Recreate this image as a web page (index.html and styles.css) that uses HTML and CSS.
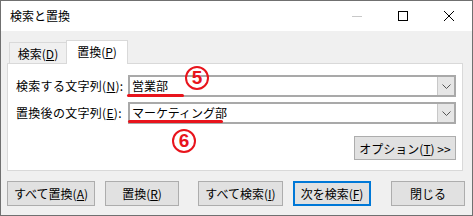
FILE: index.html
```html
<!DOCTYPE html>
<html lang="ja">
<head>
<meta charset="utf-8">
<title>検索と置換</title>
<link rel="stylesheet" href="styles.css">
</head>
<body>
<div class="window">
  <div class="titlebar">
    <div class="title">検索と置換</div>
    <div class="controls">
      <span class="ctl ctl-min"><svg width="10" height="10" viewBox="0 0 10 10"><line x1="0" y1="5.5" x2="10" y2="5.5" stroke="#c8c8c8" stroke-width="1"/></svg></span>
      <span class="ctl ctl-max"><svg width="10" height="10" viewBox="0 0 10 10"><rect x="0.5" y="0.5" width="9" height="9" fill="none" stroke="#000" stroke-width="1"/></svg></span>
      <span class="ctl ctl-close"><svg width="10" height="10" viewBox="0 0 10 10"><path d="M0 0 L10 10 M10 0 L0 10" stroke="#000" stroke-width="1"/></svg></span>
    </div>
  </div>
  <div class="content">
    <div class="tabs">
      <div class="tab">検索(<u>D</u>)</div>
      <div class="tab active">置換(<u>P</u>)</div>
    </div>
    <div class="panel">
      <div class="row row-find">
        <label class="label">検索する文字列(<u>N</u>):</label>
        <div class="combo"><span class="value">営業部</span><span class="drop"><svg width="9" height="5" viewBox="0 0 9 5"><polyline points="0.5,0.5 4.5,4.5 8.5,0.5" fill="none" stroke="#555" stroke-width="1"/></svg></span></div>
      </div>
      <div class="row row-replace">
        <label class="label">置換後の文字列(<u>E</u>):</label>
        <div class="combo"><span class="value">マーケティング部</span><span class="drop"><svg width="9" height="5" viewBox="0 0 9 5"><polyline points="0.5,0.5 4.5,4.5 8.5,0.5" fill="none" stroke="#555" stroke-width="1"/></svg></span></div>
      </div>
      <div class="row row-opt">
        <button class="btn btn-opt">オプション(<u>T</u>)&nbsp;&gt;&gt;</button>
      </div>
      <span class="mark line1"></span>
      <span class="mark num num5">5</span>
      <span class="mark line2"></span>
      <span class="mark num num6">6</span>
    </div>
    <div class="actions">
      <button class="btn b1">すべて置換(<u>A</u>)</button>
      <button class="btn b2">置換(<u>R</u>)</button>
      <button class="btn b3">すべて検索(<u>I</u>)</button>
      <button class="btn b4 focused">次を検索(<u>F</u>)</button>
      <button class="btn b5">閉じる</button>
    </div>
  </div>
</div>
</body>
</html>
```
FILE: styles.css
```css
* { box-sizing: border-box; }
html, body { margin: 0; padding: 0; }
body {
  font-family: "Noto Sans CJK JP", "Noto Sans", sans-serif;
  font-size: 12px;
  color: #000;
  background: #fff;
}
u { text-decoration: underline; text-underline-offset: 1px; }
.window {
  width: 473px;
  height: 216px;
  border: 1px solid #707070;
  display: flex;
  flex-direction: column;
  background: #f0f0f0;
}
.titlebar {
  height: 30px;
  background: #fff;
  display: flex;
  align-items: center;
  justify-content: space-between;
  flex: none;
}
.title { padding-left: 9px; line-height: 16px; }
.controls { display: flex; align-items: center; height: 100%; }
.ctl { width: 46px; height: 100%; display: flex; align-items: center; justify-content: center; }
.ctl svg { display: block; }
.content { flex: 1; display: flex; flex-direction: column; }
.tabs {
  display: flex;
  align-items: flex-end;
  margin-top: 9px;
  padding-left: 8px;
  height: 23px;
  position: relative;
  z-index: 1;
}
.tab {
  height: 21px;
  width: 58px;
  border: 1px solid #d9d9d9;
  border-bottom: none;
  background: #f0f0f0;
  display: flex;
  align-items: center;
  justify-content: center;
  padding-top: 1px;
}
.tab.active {
  height: 24px;
  width: 62px;
  background: #fff;
  margin-left: -1px;
  margin-bottom: -1px;
  align-items: flex-start;
  padding-top: 2px;
}
.panel {
  position: relative;
  margin: 0 9px 0 6px;
  height: 108px;
  background: #fff;
  border: 1px solid #d9d9d9;
  padding: 11px 6px 0 8px;
}
.row { display: flex; align-items: center; }
.row-replace { margin-top: 5px; }
.label { width: 112px; flex: none; line-height: 16px; letter-spacing: 0.3px; }
.combo {
  flex: 1;
  height: 22px;
  border: 2px solid #a9a9a9;
  display: flex;
  align-items: stretch;
  background: #fff;
}
.value { flex: 1; padding-left: 2px; line-height: 18px; }
.drop {
  width: 17px;
  background: #e6e6e6;
  border-left: 1px solid #c8c8c8;
  display: flex;
  align-items: center;
  justify-content: center;
}
.drop svg { display: block; }
.row-opt { justify-content: flex-end; margin-top: 12px; }
.btn {
  font: inherit;
  color: #000;
  background: #e1e1e1;
  border: 1px solid #adadad;
  padding: 0;
  margin: 0;
  height: 25px;
  display: flex;
  align-items: center;
  justify-content: center;
}
.btn-opt { width: 102px; height: 24px; }
.actions { display: flex; margin-top: 10px; padding-left: 6px; }
.b1 { width: 88px; }
.b2 { width: 74px; margin-left: 10px; }
.b3 { width: 85px; margin-left: 19px; }
.b4 { width: 78px; margin-left: 10px; }
.b5 { width: 74px; margin-left: 20px; }
.btn.focused { border: 2px solid #0078d7; }
.mark { position: absolute; }
.line1, .line2 {
  height: 3px;
  background: #e8141c;
  border-radius: 2px;
}
.line1 { left: 119px; top: 30px; width: 57px; }
.line2 { left: 120px; top: 56px; width: 95px; }
.num {
  width: 24px;
  height: 24px;
  border: 2px solid #e8141c;
  border-radius: 50%;
  color: #e8141c;
  font-family: "Liberation Sans", Arial, sans-serif;
  font-weight: bold;
  font-size: 19px;
  line-height: 20px;
  text-align: center;
}
.num5 { left: 177px; top: 2px; }
.num6 { left: 164px; top: 65px; }
```
